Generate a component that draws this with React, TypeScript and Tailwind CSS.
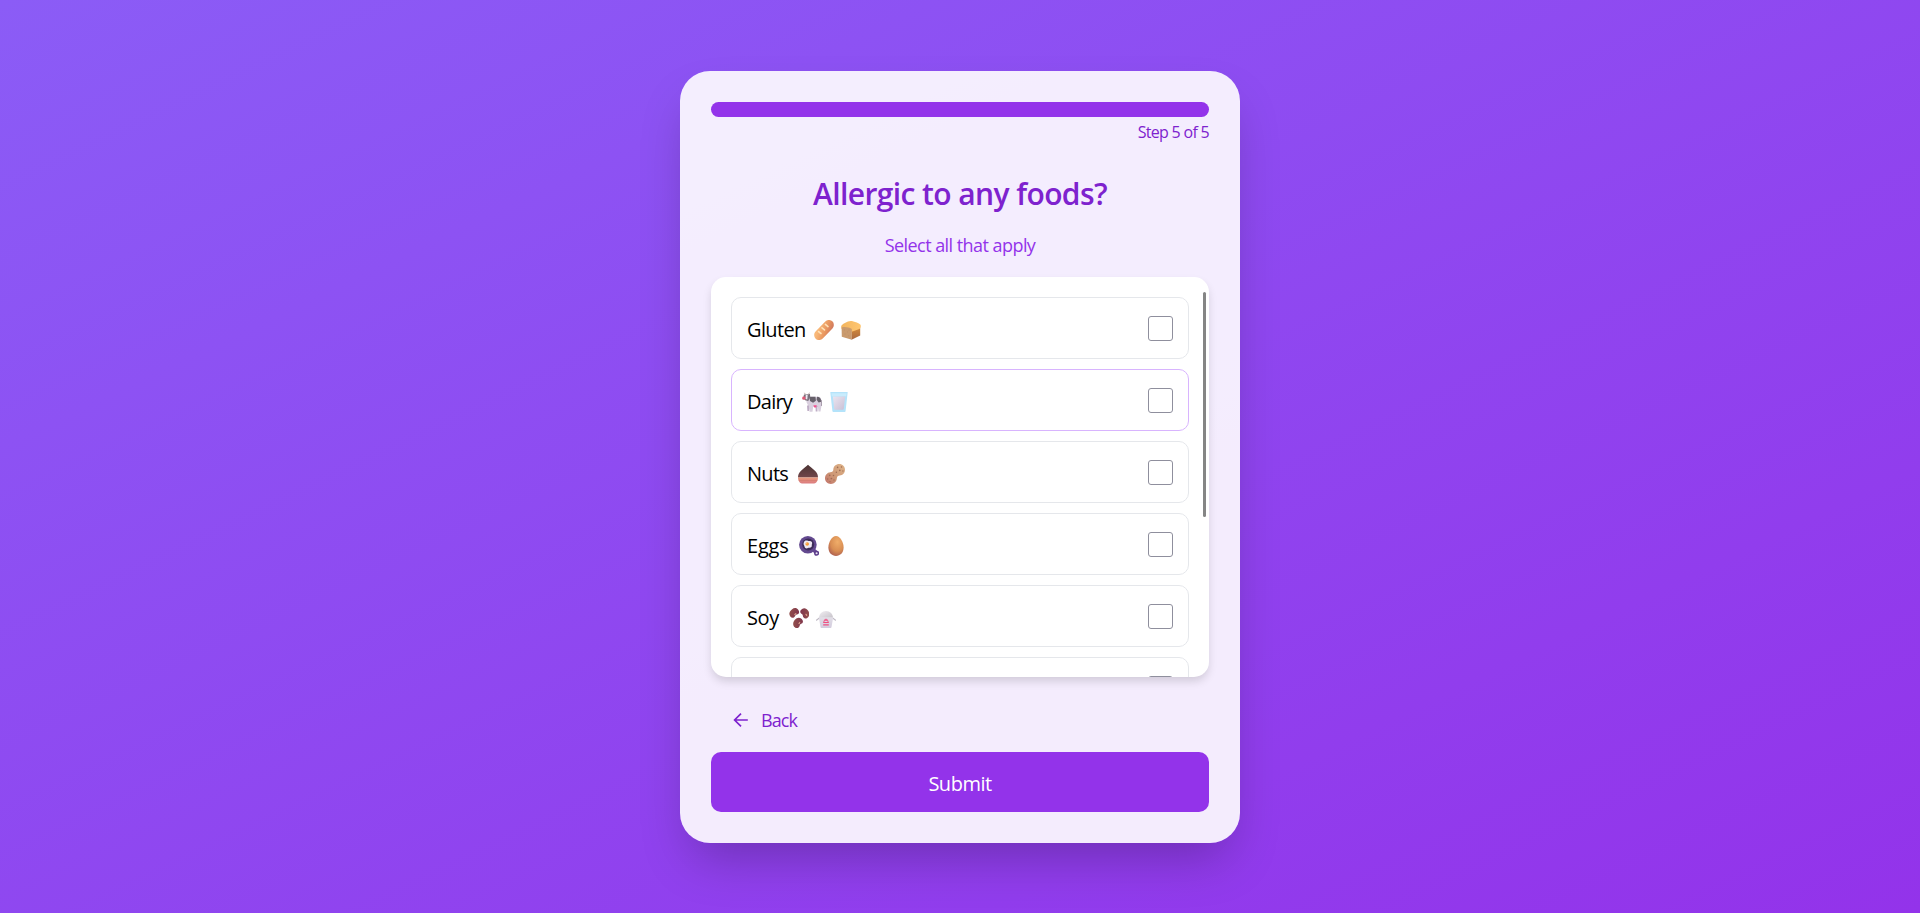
import type { ReactNode } from "react";

function Emoji({ children, className = "" }: { children: ReactNode; className?: string }) {
  return (
    <svg viewBox="0 0 20 20" className={`h-5 w-5 shrink-0 ${className}`} aria-hidden="true">
      {children}
    </svg>
  );
}

function Gradients() {
  return (
    <svg className="absolute h-0 w-0" aria-hidden="true">
      <defs>
        <linearGradient id="baguette" x1="0" y1="0" x2="1" y2="1">
          <stop offset="0.2" stopColor="#f8b878" />
          <stop offset="0.6" stopColor="#e8965f" />
          <stop offset="1" stopColor="#c9705c" />
        </linearGradient>
        <linearGradient id="crust" x1="0" y1="0" x2="1" y2="0">
          <stop offset="0" stopColor="#f2b55f" />
          <stop offset="1" stopColor="#ffc670" />
        </linearGradient>
        <linearGradient id="loafSide" x1="0" y1="0" x2="0" y2="1">
          <stop offset="0" stopColor="#d98f38" />
          <stop offset="1" stopColor="#a9683f" />
        </linearGradient>
        <linearGradient id="milk" x1="0" y1="0" x2="1" y2="1">
          <stop offset="0" stopColor="#ebe5f0" />
          <stop offset="1" stopColor="#c9bfd5" />
        </linearGradient>
        <linearGradient id="chestnut" x1="0" y1="0" x2="0" y2="1">
          <stop offset="0" stopColor="#4c3434" />
          <stop offset="1" stopColor="#70464a" />
        </linearGradient>
        <linearGradient id="chestnutBase" x1="0" y1="0" x2="0" y2="1">
          <stop offset="0" stopColor="#e69a7c" />
          <stop offset="1" stopColor="#dc7c80" />
        </linearGradient>
        <linearGradient id="peanut" x1="1" y1="0" x2="0" y2="1">
          <stop offset="0" stopColor="#dfb58a" />
          <stop offset="0.6" stopColor="#cd9674" />
          <stop offset="1" stopColor="#c2726b" />
        </linearGradient>
        <radialGradient id="egg" cx="0.6" cy="0.3" r="0.75">
          <stop offset="0" stopColor="#f0ad69" />
          <stop offset="0.6" stopColor="#d98e53" />
          <stop offset="1" stopColor="#ad5e50" />
        </radialGradient>
        <linearGradient id="bean" x1="0" y1="0" x2="1" y2="1">
          <stop offset="0" stopColor="#95534b" />
          <stop offset="1" stopColor="#7e334c" />
        </linearGradient>
        <linearGradient id="rice" x1="0" y1="0" x2="1" y2="1">
          <stop offset="0" stopColor="#f2eff3" />
          <stop offset="1" stopColor="#c4c0c7" />
        </linearGradient>
        <linearGradient id="box" x1="0" y1="0" x2="0" y2="1">
          <stop offset="0" stopColor="#e2dfe7" />
          <stop offset="1" stopColor="#d3ccde" />
        </linearGradient>
      </defs>
    </svg>
  );
}

const Baguette = () => (
  <Emoji>
    <rect x="-2" y="5" width="24" height="10" rx="5" fill="url(#baguette)" transform="rotate(-46 10 10)" />
    <g stroke="#ffe1b5" strokeWidth="1.6" strokeLinecap="round">
      <path d="M11.4 4.4 14 6.6" />
      <path d="M8 7.8 10.5 9.9" />
      <path d="M4.6 11.6 7 13.5" />
    </g>
  </Emoji>
);

const Bread = () => (
  <Emoji>
    <path d="M10.5 9 19.2 6v9.5L10.5 19.8z" fill="url(#loafSide)" />
    <path
      d="M.2 6.4C.2 4.5 6.8 1 9.6 1c3 0 10.2 2.6 10.2 4.6 0 1.8-.5 3-1.5 3.5l-6.8 2.3C8 11.6 3.6 10.2 1.2 9.3.4 8.8.2 7.6.2 6.4Z"
      fill="url(#crust)"
    />
    <path d="M.6 7.4C4 6.6 8 7.4 10.8 9V19.8L.8 16.8z" fill="#c99a6d" />
    <path d="M3 10h1M6 12h1M3.5 14h1M7.2 15.8h1M7.5 10h1" stroke="#b98a66" strokeWidth="0.7" />
  </Emoji>
);

const Cow = () => (
  <Emoji>
    <path d="M5 4.8h11.5c2 0 3 2 3 5v3.7l-1 6h-2l-.6-4.5h-4.8l-.6 4.8H7.6L6.6 14.5 4.4 10z" fill="#d9cfde" />
    <path d="M5 13.5h2v5.5H5.4zM13.5 14h2v5.5h-1.8z" fill="#bfaec6" />
    <path d="M7.5 4.8h6l.4 4-2.8 2L8 9z" fill="#66606a" />
    <path d="M15 4.8c2.6.1 4.3 1.8 4.4 5l-2.8.6-2-2.6z" fill="#66606a" />
    <path d="M19.2 8c.5 2 .5 4 .2 6" stroke="#a69aaa" strokeWidth="1" fill="none" />
    <path d="M2 2.4 8 2l.2 3.5L6.2 9 3 8.2 1.4 5.5z" fill="#77707b" />
    <path d="M3.8 2.8h1.9L5.3 7.6 3.4 7z" fill="#eee8f1" />
    <path d="M2.4.8 3.5 2.6M7.4.7 6.5 2.5" stroke="#bba5a1" strokeWidth="0.9" />
    <rect x="0.2" y="4.6" width="3.3" height="3.2" rx="1.4" fill="#dd5875" />
    <path d="M11.4 13.2h3.4l-.7 2.4h-1.8z" fill="#f0508f" />
  </Emoji>
);

const Milk = () => (
  <Emoji>
    <path d="M1.3 0h17.4l-2.1 18.9c-.1.7-.6 1.1-1.2 1.1H4.6c-.6 0-1.1-.4-1.2-1.1z" fill="#b4e3fa" />
    <path d="M2.4 1.2h15.2l-.4 3H2.8z" fill="#c9ecfd" />
    <path d="M3.9 4.6h12.2l-1.3 12.2c-.1.6-.5.9-1 .9H6.2c-.5 0-.9-.3-1-.9z" fill="url(#milk)" />
  </Emoji>
);

const Chestnut = () => (
  <Emoji>
    <path d="M10 .8C11.4 2.4 14.8 4.7 17.2 7c2 2 2.8 4 2.8 6.5H0C0 11 .8 9 2.8 7 5.2 4.7 8.6 2.4 10 .8Z" fill="url(#chestnut)" />
    <path d="M0 13.4h20c0 3.8-2 6.1-5 6.1H5c-3 0-5-2.3-5-6.1Z" fill="url(#chestnutBase)" />
    <path d="M.7 16.4h18.6" stroke="#cb7368" strokeWidth="0.5" />
  </Emoji>
);

const Peanuts = () => (
  <Emoji>
    <path
      d="M14.2 0C17.6 0 20 2.5 20 5.8c0 3.5-2.3 5.5-5.2 5.8-1.8.1-2.8.9-2.9 2.5-.2 3.6-2.8 5.9-6 5.9C2.4 20 0 17.6 0 14.3c0-3.2 2.3-5.9 5.2-6.1 2.2-.2 3-.7 3.1-2.5C8.5 2.2 11 0 14.2 0Z"
      fill="url(#peanut)"
    />
    <g fill="#a06c54">
      <circle cx="12.6" cy="3.4" r="0.8" />
      <circle cx="16.5" cy="3.1" r="0.75" />
      <circle cx="14.8" cy="6.3" r="0.85" />
      <circle cx="17.9" cy="7" r="0.65" />
      <circle cx="11.4" cy="8.2" r="0.75" />
      <circle cx="8.5" cy="11.4" r="0.75" />
      <circle cx="4.7" cy="11.4" r="0.8" />
      <circle cx="6.4" cy="14.5" r="0.85" />
      <circle cx="2.7" cy="15" r="0.75" />
      <circle cx="5" cy="17.6" r="0.7" />
      <circle cx="9" cy="16" r="0.65" />
    </g>
  </Emoji>
);

const Pan = () => (
  <Emoji>
    <path d="m13.5 13 3.6 3.4" stroke="#674894" strokeWidth="3.6" />
    <circle cx="17.6" cy="17.2" r="1.8" fill="#e9e2f0" stroke="#5b3c8a" strokeWidth="1.5" />
    <circle cx="8.9" cy="8.8" r="8.8" fill="#63498f" />
    <circle cx="9.2" cy="8.6" r="6" fill="#3d2c58" />
    <path d="M6 4.7c2-.8 3 .4 4.4.3 2.3-.1 3.2 1.6 2.6 3-.6 1.2.3 1.9-.6 3.1-1 1.2-2.4.2-3.5 1-1.4.8-3.2 0-3.4-1.6-.1-1.3-1.1-1.6-.9-3 .1-1.2.6-2.3 1.4-2.8Z" fill="#eee8f2" />
    <circle cx="8.2" cy="8" r="1.8" fill="#f69a37" />
    <circle cx="7.7" cy="7.4" r="0.6" fill="#ffc26b" />
  </Emoji>
);

const Egg = () => (
  <Emoji>
    <path d="M10 0c4 0 7.6 6.2 7.6 11.3C17.6 16.7 14.2 20 10 20s-7.6-3.3-7.6-8.7C2.4 6.2 6 0 10 0Z" fill="url(#egg)" />
  </Emoji>
);

const beanPath = "M-5.2.6C-5.2-2.4-2.6-4 .4-4 3.4-4 5.2-2.4 5.2.2 5.2 2.8 3.4 4 1.9 3.4.9 3 .2 2.5-.8 3.1-2.8 4.2-5.2 3.4-5.2.6Z";

const Beans = () => (
  <Emoji>
    <g fill="url(#bean)">
      <path d={beanPath} transform="translate(5 4.8) rotate(-38)" />
      <path d={beanPath} transform="translate(16 5.2) rotate(-122) scale(1 -1)" />
      <path d={beanPath} transform="translate(8.8 14.8) rotate(-50) scale(1.04)" />
    </g>
    <g stroke="#dca38c" strokeWidth="1.2" strokeLinecap="round">
      <path d="M5.8 6.5 6.8 5.7" />
      <path d="M17 6.3 17.7 7.3" />
      <path d="M10 15.6 10.7 14.5" />
    </g>
  </Emoji>
);

const RiceBox = () => (
  <Emoji>
    <path d="M4 9.5.4 12.2M16 9.5l3.6 2.7" stroke="#c0bac5" strokeWidth="1.1" strokeLinecap="round" />
    <path d="M3 10.5C3 5.8 6 3 10 3s7 2.8 7 7.5z" fill="url(#rice)" />
    <path d="M2.8 9.3h14.4l-1.7 9.6c-.1.7-.6 1.1-1.2 1.1H5.7c-.6 0-1.1-.4-1.2-1.1z" fill="url(#box)" />
    <path d="M10 10.8v1.6M8.2 12.2h3.6M7.4 14.5h5.2M7.2 16.8h5.6" stroke="#f04d80" strokeWidth="1.2" />
    <path d="M8.4 12.2 7.6 14.7M11.6 12.2l.8 2.5" stroke="#f04d80" strokeWidth="0.9" />
  </Emoji>
);

type Option = { id: string; label?: string; textClass: string; icons?: ReactNode; active?: boolean };

const options: Option[] = [
  { id: "gluten", label: "Gluten", textClass: "w-[67px] tracking-[-0.65px]", icons: <><Baguette /><Bread /></> },
  { id: "dairy", label: "Dairy", textClass: "w-[54.5px] tracking-[-0.75px]", icons: <><Cow /><Milk /></>, active: true },
  { id: "nuts", label: "Nuts", textClass: "w-[51px] tracking-[-0.7px]", icons: <><Chestnut /><Peanuts /></> },
  { id: "eggs", label: "Eggs", textClass: "w-[51.5px] tracking-[-0.2px]", icons: <><Pan /><Egg /></> },
  { id: "soy", label: "Soy", textClass: "w-[42px] tracking-[-0.4px]", icons: <><Beans /><RiceBox /></> },
  { id: "other", textClass: "w-[42px]" },
];

export default function App() {
  return (
    <main className="flex h-[913px] items-start justify-center bg-[linear-gradient(to_bottom_right,#8b5cf6,#9333ea)] pt-[71px] font-['Open_Sans',sans-serif]">
      <Gradients />
      <section className="flex h-[772px] w-[560px] flex-col rounded-[30px] bg-white/90 p-[31px] shadow-[0_25px_50px_-12px_rgba(0,0,0,0.25)]">
        <div className="h-[15px] shrink-0 rounded-full bg-[#9333ea]" />
        <p className="mt-[5px] h-5 text-right text-[16px] leading-5 tracking-[-0.7px] text-[#7e22ce]">Step 5 of 5</p>
        <h1 className="mt-[32px] h-10 text-center text-[30px] leading-10 font-semibold tracking-[-0.6px] text-[#7e22ce]">
          Allergic to any foods?
        </h1>
        <p className="mt-[19px] h-6 text-center text-[18px] leading-6 tracking-[-0.55px] text-[#9333ea]">Select all that apply</p>

        <div className="relative mt-5 h-[400px] shrink-0 overflow-hidden rounded-[15px] bg-white p-5 shadow-[0_5px_10px_-1px_rgba(0,0,0,0.15)]">
          <ul className="flex flex-col gap-2.5">
            {options.map((o) => (
              <li
                key={o.id}
                className={`flex h-[62px] shrink-0 items-start rounded-[10px] border px-[15px] ${o.active ? "border-[#d8b4fe]" : "border-[#e5e7eb]"}`}
              >
                <span className={`mt-[18px] shrink-0 text-[20px] leading-7 text-black ${o.textClass}`}>{o.label}</span>
                <span className="mt-[22px] flex gap-[7px]">{o.icons}</span>
                <input
                  type="checkbox"
                  className="mt-[18px] ml-auto h-[25px] w-[25px] shrink-0 appearance-none rounded-[3px] border border-[#8f8f9d] bg-white"
                />
              </li>
            ))}
          </ul>
          <span className="absolute top-[15px] right-[3.5px] h-[225px] w-[3px] rounded-full bg-[#858585]" />
        </div>

        <button className="mt-[29px] ml-5 flex h-7 items-center self-start text-[18px] leading-7 tracking-[-0.9px] text-[#7e22ce]">
          <svg viewBox="0 0 20 20" className="mr-[10px] h-5 w-5" fill="none" stroke="currentColor" strokeWidth="1.7">
            <path d="M16.8 10H3.8M10 3.6 3.6 10l6.4 6.4" />
          </svg>
          Back
        </button>
        <button className="mt-auto h-[60px] shrink-0 rounded-[10px] bg-[#9333ea] pt-[3px] text-[20px] leading-7 tracking-[-0.5px] text-white">
          Submit
        </button>
      </section>
    </main>
  );
}
